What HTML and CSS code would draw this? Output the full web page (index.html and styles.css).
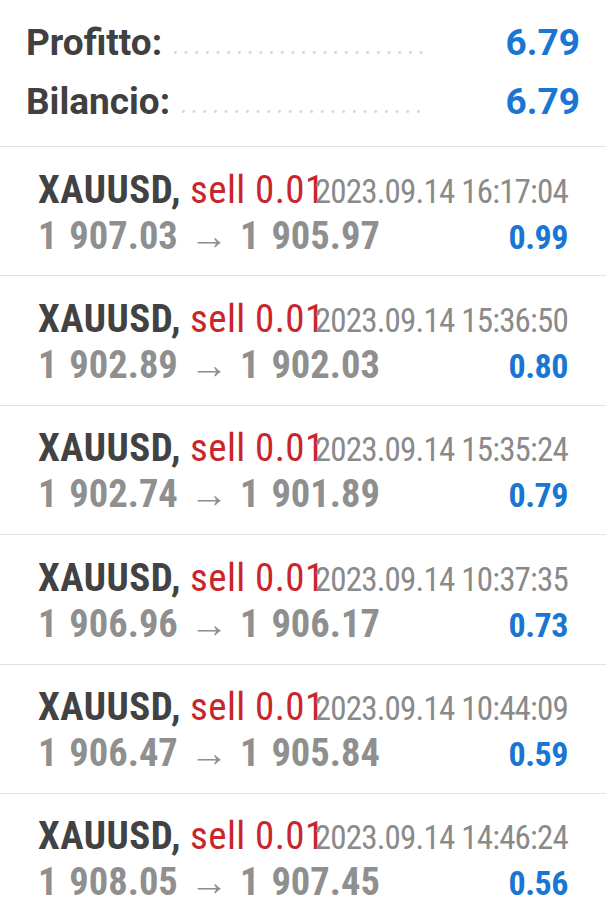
FILE: index.html
```html
<!DOCTYPE html>
<html>
<head>
<meta charset="utf-8">
<title>Storico</title>
<link rel="stylesheet" href="styles.css">
</head>
<body>

<div class="summary">
    <div class="sum-row">
        <span class="sum-label">Profitto:</span>
        <span class="leader"></span>
        <span class="sum-value">6.79</span>
    </div>
    <div class="sum-row">
        <span class="sum-label">Bilancio:</span>
        <span class="leader"></span>
        <span class="sum-value">6.79</span>
    </div>
</div>

<ul class="deals">
    <li class="deal">
        <div class="line">
            <span class="title"><b>XAUUSD,</b> <em>sell 0.01</em></span>
            <span class="time">2023.09.14 16:17:04</span>
        </div>
        <div class="line">
            <span class="price">1 907.03 &rarr; 1 905.97</span>
            <span class="profit">0.99</span>
        </div>
    </li>
    <li class="deal">
        <div class="line">
            <span class="title"><b>XAUUSD,</b> <em>sell 0.01</em></span>
            <span class="time">2023.09.14 15:36:50</span>
        </div>
        <div class="line">
            <span class="price">1 902.89 &rarr; 1 902.03</span>
            <span class="profit">0.80</span>
        </div>
    </li>
    <li class="deal">
        <div class="line">
            <span class="title"><b>XAUUSD,</b> <em>sell 0.01</em></span>
            <span class="time">2023.09.14 15:35:24</span>
        </div>
        <div class="line">
            <span class="price">1 902.74 &rarr; 1 901.89</span>
            <span class="profit">0.79</span>
        </div>
    </li>
    <li class="deal">
        <div class="line">
            <span class="title"><b>XAUUSD,</b> <em>sell 0.01</em></span>
            <span class="time">2023.09.14 10:37:35</span>
        </div>
        <div class="line">
            <span class="price">1 906.96 &rarr; 1 906.17</span>
            <span class="profit">0.73</span>
        </div>
    </li>
    <li class="deal">
        <div class="line">
            <span class="title"><b>XAUUSD,</b> <em>sell 0.01</em></span>
            <span class="time">2023.09.14 10:44:09</span>
        </div>
        <div class="line">
            <span class="price">1 906.47 &rarr; 1 905.84</span>
            <span class="profit">0.59</span>
        </div>
    </li>
    <li class="deal">
        <div class="line">
            <span class="title"><b>XAUUSD,</b> <em>sell 0.01</em></span>
            <span class="time">2023.09.14 14:46:24</span>
        </div>
        <div class="line">
            <span class="price">1 908.05 &rarr; 1 907.45</span>
            <span class="profit">0.56</span>
        </div>
    </li>
</ul>

</body>
</html>
```

FILE: styles.css
```css
body,div,ul,li{margin:0;padding:0;}
body{background:#fff;font-family:Roboto,"Liberation Sans",sans-serif;font-stretch:80%;overflow:hidden;}
ul{list-style-type:none;}

/* riepilogo */
.summary{padding:13px 26px 15px 26px;}
.sum-row{display:flex;align-items:baseline;height:59px;line-height:59px;}
.sum-label{font-size:37px;font-weight:700;font-stretch:96%;color:#404040;white-space:nowrap;}
.leader{flex:1;height:5px;margin-left:8px;background:radial-gradient(circle,#d6d6d6 1.1px,transparent 1.7px) 0 0/10.7px 5px repeat-x;}
.sum-value{width:153px;text-align:right;font-size:37px;font-weight:700;font-stretch:100%;color:#1976d2;}

/* operazioni */
.deal{border-top:1px solid #e2e2e2;padding:19.5px 38px 16.9px 38px;}
.deal .line{display:flex;align-items:baseline;height:46px;line-height:46px;}
.title{flex:1 1 0;min-width:0;white-space:nowrap;font-size:39px;}
.title b{font-weight:700;font-stretch:85%;letter-spacing:0.5px;color:#424242;}
.title em{font-style:normal;letter-spacing:0.4px;color:#c9252c;}
.time{flex:none;font-size:33px;font-stretch:75%;letter-spacing:-0.8px;color:#8a8a8a;white-space:nowrap;}
.price{flex:1;white-space:nowrap;font-size:38.5px;font-weight:700;font-stretch:86%;word-spacing:3px;color:#8f8f8f;}
.profit{flex:none;font-size:34px;font-weight:700;font-stretch:75%;letter-spacing:-0.5px;color:#1976d2;}
```
